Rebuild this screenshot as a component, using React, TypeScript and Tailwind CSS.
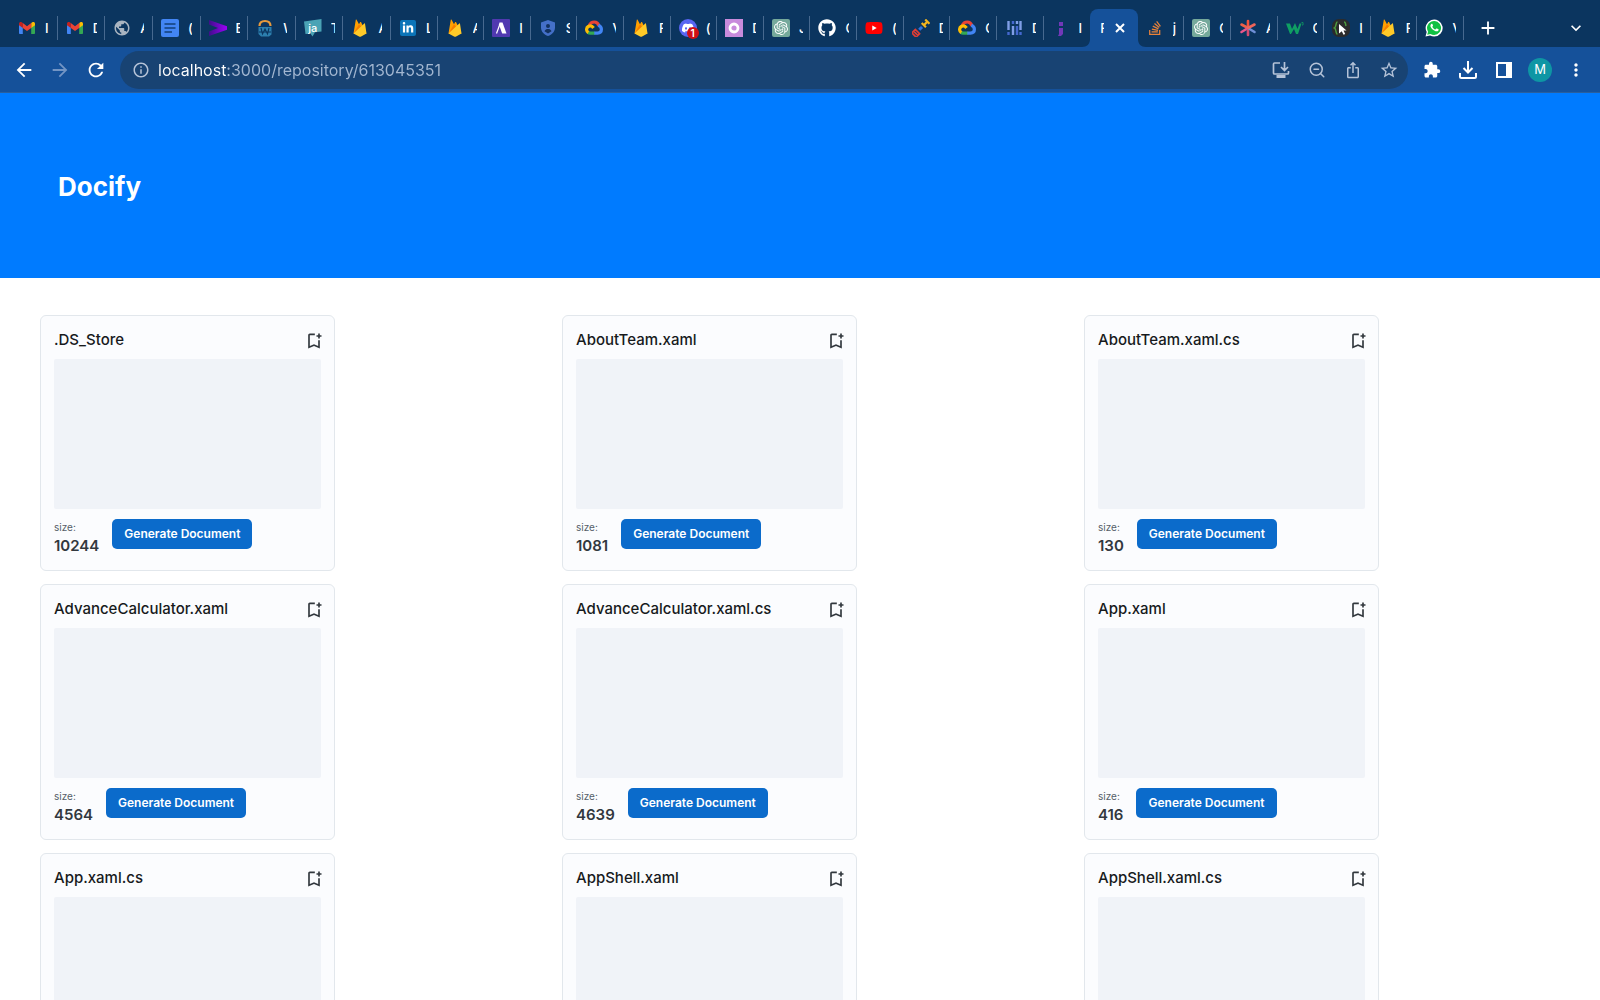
import { ReactNode, useState } from "react";
import { ZoomOut } from "lucide-react";
import {
    MdAdd,
    MdArrowBack,
    MdArrowForward,
    MdExtension,
    MdInfoOutline,
    MdIosShare,
    MdKeyboardArrowDown,
    MdMoreVert,
    MdOutlineBookmarkAdd,
    MdPublic,
    MdRefresh,
    MdStarOutline,
} from "react-icons/md";
import { FaGithub, FaLinkedinIn, FaStackOverflow, FaYoutube } from "react-icons/fa";
import { SiDiscord, SiOpenai } from "react-icons/si";

/* Favicons */

function Gmail() {
    return (
        <svg viewBox="0 0 18 18" className="size-full">
            <path d="M1 5v9.2c0 .5.4.8.8.8h3V8.2z" fill="#4285f4" />
            <path d="M17 5v9.2c0 .5-.4.8-.8.8h-3V8.2z" fill="#34a853" />
            <path d="M1 4.6C1 3 2.8 2.6 4 3.4l.8.7v4.8L1 6.2z" fill="#c5221f" />
            <path d="M17 4.6C17 3 15.2 2.6 14 3.4l-.8.7v4.8L17 6.2z" fill="#fbbc04" />
            <path d="M4.8 4.1L9 7.3l4.2-3.2v4.8L9 12 4.8 8.9z" fill="#ea4335" />
        </svg>
    );
}

function Docs() {
    return (
        <svg viewBox="0 0 18 18" className="size-full">
            <rect width="18" height="18" rx="2" fill="#4285f4" />
            <path d="M3.5 5h11M3.5 9h11M3.5 13h7.5" stroke="#123f78" strokeWidth="1.6" />
        </svg>
    );
}

function PurpleArrow() {
    return (
        <svg viewBox="0 0 18 18" className="size-full">
            <defs>
                <linearGradient id="arrow" x1="0" x2="1">
                    <stop offset="0" stopColor="#3d0f8a" />
                    <stop offset="1" stopColor="#a100ff" />
                </linearGradient>
            </defs>
            <path d="M0 1l19 6.5v3L0 17v-4.5L9 9 0 5.5z" fill="url(#arrow)" />
        </svg>
    );
}

function Padlock() {
    return (
        <svg viewBox="0 0 18 18" className="size-full">
            <path d="M3.5 7C3.5 3.3 5.5 2 9 2s5.5 1.3 5.5 5" fill="none" stroke="#e79a3c" strokeWidth="2.2" />
            <path d="M2.5 8h13v7.5L13 17.5H5L2.5 15z" fill="#2c7fae" />
            <path d="M5 9l1.5 6L9 10l2.5 5L13 9M3 13h12" fill="none" stroke="#0b355f" strokeWidth="1.1" />
        </svg>
    );
}

function Jasmine() {
    return (
        <span className="relative grid size-full place-items-center">
            <svg viewBox="0 0 18 18" className="absolute inset-0 size-full">
                <path d="M0 2.5L17.5 0v12.5l-6.5.8-2.5 4.2-2-3-5 .5z" fill="#4aa3b5" />
            </svg>
            <span className="relative text-[11px] leading-3 font-medium text-white">ja</span>
        </span>
    );
}

function Firebase() {
    return (
        <svg viewBox="0 0 18 18" className="size-full">
            <path d="M2.5 14.5L4.8.8c.1-.4.6-.5.8-.1L8 5.2l1.2-2.1c.2-.3.6-.3.8 0l5.5 11.4z" fill="#ffa000" />
            <path d="M10.5 8.3L8 5.2 2.5 14.5z" fill="#f57c00" />
            <path d="M15.5 14.5L14 4.7c-.1-.3-.5-.5-.7-.2L2.5 14.5l6 3.2c.4.2.8.2 1.2 0z" fill="#ffca28" />
        </svg>
    );
}

function LinkedIn() {
    return (
        <span className="grid size-4 place-items-center rounded-xs bg-[#0b74b8]">
            <FaLinkedinIn className="size-3 text-white" />
        </span>
    );
}

function LetterA() {
    return (
        <svg viewBox="0 0 18 18" className="size-full">
            <rect width="18" height="18" rx="1" fill="#5039b0" />
            <path d="M7.5 3.5h3l4 11h-4.300l-3.300-9z" fill="#fff" />
            <path d="M7.6 6L4.5 14.5" stroke="#fff" strokeWidth="1.2" />
        </svg>
    );
}

function Shield() {
    return (
        <svg viewBox="0 0 18 18" className="size-full">
            <path d="M9 1l7 2.5v5c0 4-3 7.300-7 8.500-4-1.200-7-4.500-7-8.500v-5z" fill="#4470c8" />
            <circle cx="9" cy="7" r="2" fill="#12325f" />
            <path d="M5.5 12.3c.6-1.600 2-2.200 3.500-2.200s2.900.6 3.500 2.200L9 14.500z" fill="#12325f" />
        </svg>
    );
}

function GoogleCloud() {
    return (
        <svg viewBox="0 0 18 18" className="size-full">
            <g fill="none" strokeWidth="3.2">
                <path d="M4.3 6.3C5.5 3.6 7.5 3 9.3 3c2.2 0 3.9 1.4 4.6 3.7" stroke="#ea4335" />
                <path d="M13.3 6.3c2 .9 3.1 2 3.1 4 0 2.4-1.7 3.8-3.9 3.8H9" stroke="#4285f4" />
                <path d="M9.3 14.1H5.4c-1 0-1.8-.2-2.5-.8" stroke="#34a853" />
                <path d="M3.3 13.6C1 12 1 8.8 3.3 7.5c2-1 4-.3 5.2 1.5" stroke="#fbbc04" />
            </g>
        </svg>
    );
}

function Discord() {
    return (
        <span className="relative block size-full">
            <span className="grid size-full place-items-center rounded-full bg-[#5865f2]">
                <SiDiscord className="size-3 text-white" />
            </span>
            <span className="absolute top-2 left-2 grid size-3 place-items-center rounded-full bg-[#d10f14] text-[10px] leading-3 font-semibold text-white">
                1
            </span>
        </span>
    );
}

function PinkRing() {
    return (
        <svg viewBox="0 0 18 18" className="size-full">
            <rect width="18" height="18" fill="#c88bdc" />
            <circle cx="9" cy="9" r="4" fill="none" stroke="#fff" strokeWidth="2.8" />
        </svg>
    );
}

function ChatGpt() {
    return (
        <span className="grid size-full place-items-center rounded-xs bg-[#75a99b]">
            <SiOpenai className="size-[14px] text-white" />
        </span>
    );
}

function YouTube() {
    return (
        <span className="relative grid size-full place-items-center">
            <span className="absolute size-2 bg-white" />
            <FaYoutube className="relative size-[18px] text-[#f00]" />
        </span>
    );
}

function DevHunt() {
    return (
        <svg viewBox="0 0 18 18" className="size-full">
            <g fill="none" transform="rotate(-45 9 9)">
                <path d="M-1 6h5v6h-5zM1.5 6v6" stroke="#dc3d35" strokeWidth="1.7" />
                <path d="M6.5 9h4" stroke="#2f73e0" strokeWidth="3" />
                <path d="M13 6v6M18 6v6M13 9h5" stroke="#f4b61e" strokeWidth="2.2" />
            </g>
        </svg>
    );
}

function Bars() {
    return (
        <svg viewBox="0 0 18 18" className="size-full">
            <path d="M3.5 2v9M8 7v9M12 2v3M15.5 2v9" stroke="#7f9ee6" strokeWidth="2.4" />
            <path d="M3.5 13v3M8 2v3M12 7v9M15.5 13v3" stroke="#4468cf" strokeWidth="2.4" />
        </svg>
    );
}

function Semicolon() {
    return (
        <svg viewBox="0 0 18 18" className="size-full">
            <path d="M7 3h4v4H7zM7 9h4v6l-2 2H6l1-2z" fill="#7138b8" />
        </svg>
    );
}

function Asterisk() {
    return (
        <svg viewBox="0 0 18 18" className="size-full">
            <g strokeWidth="2.6" strokeLinecap="round">
                <path d="M9 9V2" stroke="#f0533d" />
                <path d="M9 9L2.5 5.5" stroke="#ee6048" />
                <path d="M9 9l-6.500 4" stroke="#e9578b" />
                <path d="M9 9v7" stroke="#d44b70" />
                <path d="M9 9l6.500 4" stroke="#6f8fd6" />
                <path d="M9 9l6.500-3.500" stroke="#f0655a" />
            </g>
        </svg>
    );
}

function GreenW() {
    return (
        <svg viewBox="0 0 18 18" className="size-full">
            <path d="M0 4.5h4L6 10l3-6 2.500 6 2-5.500h2L12 15h-2L8 10l-3 5H4z" fill="#0f9f63" />
            <path d="M15.5 3.5H17V6h-1" fill="none" stroke="#0f8a63" />
        </svg>
    );
}

function Cursor() {
    return (
        <svg viewBox="0 0 18 18" className="size-full">
            <rect width="18" height="18" rx="7" fill="#2b2b2b" />
            <path d="M5.5 3C3.500 3 4.500 8 2.500 9c2 1 1 6 3 6M12 3c2 0 1.500 3 2 4" fill="none" stroke="#4c9a3f" strokeWidth="1.5" />
            <path d="M7 5l7.500 6.500h-3l1.700 3.500-1.700.8-1.700-3.500L7 14.500z" fill="#fff" />
        </svg>
    );
}

function WhatsApp() {
    return (
        <svg viewBox="0 0 18 18" className="size-full">
            <path d="M.5 17.500l1.200-4.400A8.500 8.500 0 119.200 17.500a9 9 0 01-4.200-1.100z" fill="#fff" />
            <path d="M2.200 15.800l.9-3.100A7 7 0 119.200 16a7 7 0 01-3.700-1z" fill="#0fc143" />
            <path d="M6.300 4.900c.4-.3.900-.2 1.100.2l.6 1.400c.1.300-.2.700-.7 1.200.7 1.400 1.700 2.300 3.100 2.900l.9-1c.2-.3.500-.2.700-.1l1.400.7c.4.2.3.8 0 1.300-.6.900-1.800 1-2.800.7-2.600-.8-4.300-2.400-5.100-4.600-.3-1 .1-2.100.8-2.700z" fill="#fff" />
        </svg>
    );
}

type BrowserTab = { title: string; icon?: ReactNode };

// Tabs are squeezed so hard that only the first letter of each title fits
const OLD_TABS: BrowserTab[] = [
    { title: "I", icon: <Gmail /> },
    { title: "D", icon: <Gmail /> },
    { title: "A", icon: <MdPublic className="size-full text-[#a9b4c0]" /> },
    { title: "(", icon: <Docs /> },
    { title: "E", icon: <PurpleArrow /> },
    { title: "W", icon: <Padlock /> },
    { title: "T", icon: <Jasmine /> },
    { title: "A", icon: <Firebase /> },
];

const NEW_TABS: BrowserTab[] = [
    { title: "L", icon: <LinkedIn /> },
    { title: "A", icon: <Firebase /> },
    { title: "I", icon: <LetterA /> },
    { title: "S", icon: <Shield /> },
    { title: "V", icon: <GoogleCloud /> },
    { title: "F", icon: <Firebase /> },
    { title: "(", icon: <Discord /> },
    { title: "D", icon: <PinkRing /> },
    { title: "J", icon: <ChatGpt /> },
    { title: "C", icon: <FaGithub className="size-full text-white" /> },
    { title: "(", icon: <YouTube /> },
    { title: "D", icon: <DevHunt /> },
    { title: "C", icon: <GoogleCloud /> },
    { title: "D", icon: <Bars /> },
    { title: "I", icon: <Semicolon /> },
    { title: "F" },
    { title: "j", icon: <FaStackOverflow className="size-4 text-[#e8823a]" /> },
    { title: "C", icon: <ChatGpt /> },
    { title: "A", icon: <Asterisk /> },
    { title: "C", icon: <GreenW /> },
    { title: "I", icon: <Cursor /> },
    { title: "F", icon: <Firebase /> },
    { title: "V", icon: <WhatsApp /> },
];

const ACTIVE_INDEX = 15;

const FILES = [
    { name: ".DS_Store", size: 10244 },
    { name: "AboutTeam.xaml", size: 1081 },
    { name: "AboutTeam.xaml.cs", size: 130 },
    { name: "AdvanceCalculator.xaml", size: 4564 },
    { name: "AdvanceCalculator.xaml.cs", size: 4639 },
    { name: "App.xaml", size: 416 },
    { name: "App.xaml.cs", size: 271 },
    { name: "AppShell.xaml", size: 1530 },
    { name: "AppShell.xaml.cs", size: 188 },
];

function TabTitle({ title }: { title: string }) {
    return (
        <span className="w-1 shrink-0 overflow-hidden text-left text-[13px] leading-4 font-medium whitespace-nowrap text-white">
            {title}
        </span>
    );
}

function Tab({ tab, divider = true }: { tab: BrowserTab; divider?: boolean }) {
    return (
        <button
            type="button"
            className={`flex h-6 min-w-0 flex-1 items-center gap-[9px] border-r pl-2 ${divider ? "border-[#47698f]" : "border-transparent"}`}
        >
            <span className="grid size-[18px] shrink-0 place-items-center">{tab.icon}</span>
            <TabTitle title={tab.title} />
        </button>
    );
}

function ActiveTab({ tab }: { tab: BrowserTab }) {
    return (
        <div className="relative flex h-[38px] min-w-0 flex-1 items-center gap-2 rounded-t-lg bg-[#15519a] pl-[10px] text-white">
            <svg viewBox="0 0 8 8" className="absolute bottom-0 -left-2 size-2 fill-[#15519a]">
                <path d="M8 0v8H0c5 0 8-3 8-8z" />
            </svg>
            <svg viewBox="0 0 8 8" className="absolute -right-2 bottom-0 size-2 fill-[#15519a]">
                <path d="M0 0v8h8C3 8 0 5 0 0z" />
            </svg>
            <TabTitle title={tab.title} />
            <button type="button" aria-label="Close tab" className="grid size-4 place-items-center">
                <svg viewBox="0 0 10 10" className="size-[10px] fill-none stroke-current stroke-2">
                    <path d="M1 1l8 8M9 1L1 9" />
                </svg>
            </button>
        </div>
    );
}

function ToolButton({ label, children, className = "text-white" }: { label: string; children: ReactNode; className?: string }) {
    return (
        <button type="button" aria-label={label} className={`grid h-9 w-9 shrink-0 place-items-center ${className}`}>
            {children}
        </button>
    );
}

function BrowserChrome() {
    const [url, setUrl] = useState("localhost:3000/repository/613045351");

    return (
        <header className="shrink-0">
            {/* Tab strip */}
            <div className="flex h-[47px] items-center bg-[#0b355f] pt-[9px] pl-[10px]">
                <div className="flex h-[38px] min-w-0 flex-[381] items-center">
                    {OLD_TABS.map((tab, i) => (
                        <Tab key={i} tab={tab} />
                    ))}
                </div>
                <div className="flex h-[38px] min-w-0 flex-[1073] items-center">
                    {NEW_TABS.map((tab, i) =>
                        i === ACTIVE_INDEX ? (
                            <ActiveTab key={i} tab={tab} />
                        ) : (
                            <Tab key={i} tab={tab} divider={i !== ACTIVE_INDEX - 1} />
                        )
                    )}
                </div>
                <div className="flex w-[136px] shrink-0 items-center justify-between px-[6px]">
                    <ToolButton label="New tab">
                        <MdAdd className="size-[22px]" />
                    </ToolButton>
                    <ToolButton label="Search tabs">
                        <MdKeyboardArrowDown className="size-5" />
                    </ToolButton>
                </div>
            </div>

            {/* Toolbar */}
            <div className="flex h-[46px] items-center gap-[6px] border-b border-[#2a5f9c] bg-[#15519a] px-[6px]">
                <div className="flex">
                    <ToolButton label="Back">
                        <MdArrowBack className="size-[22px]" />
                    </ToolButton>
                    <ToolButton label="Forward" className="text-[#7395c4]">
                        <MdArrowForward className="size-[22px]" />
                    </ToolButton>
                    <ToolButton label="Reload">
                        <MdRefresh className="size-[22px]" />
                    </ToolButton>
                </div>
                <div className="flex h-[38px] min-w-0 flex-1 items-center rounded-full bg-[#184373] pr-px pl-3 text-[#b5c3d8]">
                    <MdInfoOutline className="size-[18px] shrink-0" />
                    <input
                        aria-label="Address"
                        value={url}
                        onChange={e => setUrl(e.target.value)}
                        className="ml-2 min-w-0 flex-1 bg-linear-to-r from-white from-[69px] to-[#a3b7d1] to-[69px] bg-clip-text text-base text-transparent outline-none"
                    />
                    <ToolButton label="Install app" className="">
                        <svg viewBox="0 0 18 18" className="size-[18px] fill-none stroke-current stroke-[1.7]">
                            <path d="M8 2H2.500c-.6 0-1 .4-1 1v9c0 .6.4 1 1 1h13c.6 0 1-.4 1-1v-2M12.500 1v8M9 6l3.500 3.500L16 6" />
                            <path d="M4.5 15.5h9" strokeWidth="3" />
                        </svg>
                    </ToolButton>
                    <ToolButton label="Zoom" className="">
                        <ZoomOut className="size-[18px]" />
                    </ToolButton>
                    <ToolButton label="Share" className="">
                        <MdIosShare className="size-[18px]" />
                    </ToolButton>
                    <ToolButton label="Bookmark" className="">
                        <MdStarOutline className="size-5" />
                    </ToolButton>
                </div>
                <div className="flex">
                    <ToolButton label="Extensions">
                        <MdExtension className="size-[18px]" />
                    </ToolButton>
                    <ToolButton label="Downloads">
                        <svg viewBox="0 0 20 20" className="size-5 fill-none stroke-current stroke-2">
                            <path d="M10 1v11M5.5 8l4.500 4.500L14.500 8M2 13v3.500c0 .8.500 1.500 1.500 1.500h13c1 0 1.500-.7 1.500-1.500V13" />
                        </svg>
                    </ToolButton>
                    <ToolButton label="Side panel">
                        <svg viewBox="0 0 16 16" className="size-4 fill-current">
                            <path fillRule="evenodd" d="M0 0h16v16H0zM2 2v12h8V2z" />
                        </svg>
                    </ToolButton>
                    <ToolButton label="Profile">
                        <span className="grid size-6 place-items-center rounded-full bg-[#0e96a4] text-[13px]">M</span>
                    </ToolButton>
                    <ToolButton label="Menu">
                        <MdMoreVert className="size-5" />
                    </ToolButton>
                </div>
            </div>
        </header>
    );
}

function FileCard({ name, size }: { name: string; size: number }) {
    return (
        <article className="w-[295px] rounded-md border border-[#e2e7ec] bg-[#fbfcfe] p-[13px]">
            <div className="flex h-[30px] items-start justify-between">
                <h2 className="text-[15px] leading-[22px] font-medium text-[#171a1c]">{name}</h2>
                <button type="button" aria-label={`Bookmark ${name}`} className="-mr-[3px] pt-[2px] text-[#32383e]">
                    <MdOutlineBookmarkAdd className="size-5" />
                </button>
            </div>
            <div className="h-[150px] rounded-xs bg-[#f0f3f8]" />
            <div className="flex items-start gap-[13px] pt-[10px]">
                <div>
                    <p className="text-[10px] leading-4 text-[#555e68]">size:</p>
                    <p className="text-[15px] leading-[22px] font-semibold text-[#32383e]">{size}</p>
                </div>
                <button type="button" className="h-[30px] rounded-[5px] bg-[#0b6bcb] px-3 text-xs font-semibold text-white">
                    Generate Document
                </button>
            </div>
        </article>
    );
}

export default function App() {
    return (
        <div className="flex h-screen flex-col bg-white font-['Inter',sans-serif]">
            <BrowserChrome />
            <main className="min-h-0 flex-1 overflow-y-auto [scrollbar-width:none]">
                <div className="flex h-[185px] items-center bg-[#007bff] px-[58px] pt-[2px]">
                    <h1 className="text-[26px] leading-8 font-bold text-white">Docify</h1>
                </div>
                <section className="grid grid-cols-3 gap-[13px] pt-[37px] pr-[7px] pb-10 pl-10">
                    {FILES.map(file => (
                        <FileCard key={file.name} name={file.name} size={file.size} />
                    ))}
                </section>
            </main>
        </div>
    );
}
